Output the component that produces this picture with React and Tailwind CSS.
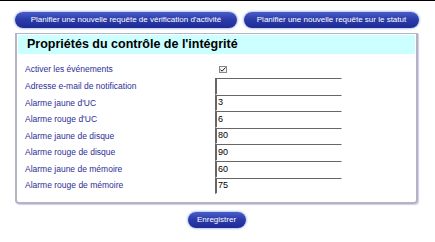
const rows = [
  { label: "Adresse e-mail de notification", value: "" },
  { label: "Alarme jaune d'UC", value: "3" },
  { label: "Alarme rouge d'UC", value: "6" },
  { label: "Alarme jaune de disque", value: "80" },
  { label: "Alarme rouge de disque", value: "90" },
  { label: "Alarme jaune de mémoire", value: "60" },
  { label: "Alarme rouge de mémoire", value: "75" },
];

const PillButton = ({ children, className = "" }) => (
  <button
    type="button"
    className={`h-[16px] rounded-full bg-gradient-to-b from-[#4a5cc8] via-[#2a3aa8] to-[#1e2c94] px-2 text-[8px] leading-none text-white shadow-[0_0_2px_1px_#b8c4f0] ${className}`}
  >
    {children}
  </button>
);

const App = () => {
  return (
    <div className="h-[242px] w-[435px] bg-white font-['Liberation_Sans',Arial,sans-serif]">
      <div className="h-px bg-black" />
      <div className="flex gap-[7px] pl-[15px] pt-[11px]">
        <PillButton className="w-[222px]">Planifier une nouvelle requête de vérification d'activité</PillButton>
        <PillButton className="w-[175px]">Planifier une nouvelle requête sur le statut</PillButton>
      </div>

      <div className="mx-[15px] mt-[5px] w-[403px] rounded-b-[4px] border-2 border-t border-[#b4b4c4] pb-[8px] shadow-[1px_1px_1px_#d8c8e8]">
        <div className="mx-px mt-px bg-[#ccffff] px-[9px] pb-[2px] pt-[2px]">
          <h1 className="text-[12.5px] font-bold leading-[15px] text-black">Propriétés du contrôle de l'intégrité</h1>
        </div>

        <div className="pl-[8px] pt-[6px]">
          <div className="grid h-[18px] grid-cols-[190px_127px] items-center">
            <span className="text-[8.5px] text-[#2e2e96]">Activer les événements</span>
            <span className="ml-[4px] flex h-[7px] w-[8px] items-center justify-center border border-[#888] bg-[#f4f4f4]">
              <svg width="6" height="5" viewBox="0 0 6 5">
                <path d="M0.5 2.5 L2 4.2 L5.5 0.5" stroke="#222" strokeWidth="1" fill="none" />
              </svg>
            </span>
          </div>
          {rows.map((r) => (
            <div key={r.label} className="grid h-[16.6px] grid-cols-[190px_127px] items-center">
              <span className="text-[8.5px] text-[#2e2e96]">{r.label}</span>
              <div className="flex h-full items-center border-l-2 border-t border-b border-r border-l-[#666] border-t-[#666] border-b-white border-r-white pl-px text-[9px] text-black">
                {r.value}
              </div>
            </div>
          ))}
        </div>
      </div>

      <div className="mt-[8px] flex justify-center">
        <PillButton className="w-[58px] -translate-x-[1px] px-1 text-[8.5px]">Enregistrer</PillButton>
      </div>
    </div>
  );
};

export default App;
